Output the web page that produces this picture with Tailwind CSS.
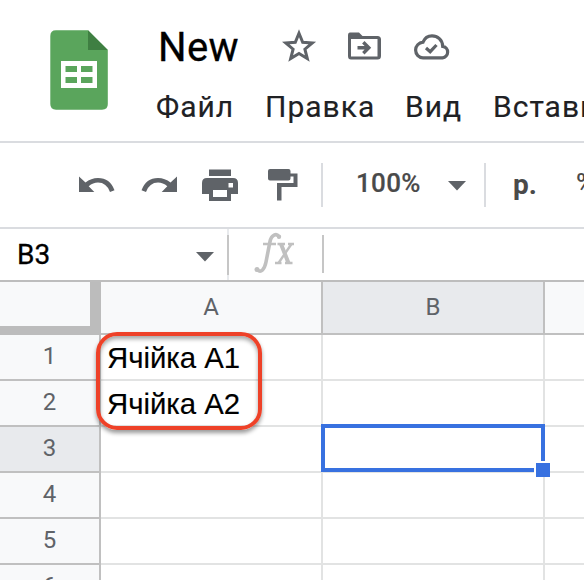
<!DOCTYPE html>
<html lang="ru">
<head>
<meta charset="utf-8">
<title>New</title>
<script src="https://cdn.jsdelivr.net/npm/@tailwindcss/browser@4"></script>
</head>
<body class="w-[584px] h-[580px] overflow-hidden bg-white font-['Roboto',sans-serif] text-black">
<div class="w-[584px] h-[580px] overflow-hidden flex flex-col">
  <header class="h-[143px] shrink-0 border-b-2 border-[#dadce0] flex overflow-hidden">
    <svg class="shrink-0 ml-[50px] mt-[30px]" width="58" height="80" viewBox="0 0 58 80">
      <path fill="#5aa55c" d="M6 .3H38L57.800 20V74Q58 79.700 52 79.700H6Q.3 79.700 .3 74V6Q.3 .3 6 .3Z"/>
      <path fill="#3f7f42" d="M38 .3L57.800 20H38Z"/>
      <path fill="#fff" fill-rule="evenodd" d="M11 31H47V58H11ZM15.500 36V42H27V36ZM31 36V42H42.500V36ZM15.500 47V53H27V47ZM31 47V53H42.500V47Z"/>
    </svg>
    <div class="shrink-0 pl-[48px] flex flex-col">
      <div class="flex h-[67px] mt-[27px] mb-[-2px]">
        <h1 class="w-[126px] pl-[2px] mt-px text-[40px] leading-[40px] tracking-[0.4px] whitespace-nowrap [-webkit-text-stroke:0.3px_#000]">New</h1>
        <svg class="shrink-0 mt-[1.500px]" width="36" height="36" viewBox="0 0 36 36"><path fill="none" stroke="#5f6368" stroke-width="3" d="M17 4.300L20.700 13.300L30.300 14L22.900 20.200L25.300 29.600L17 24.500L8.700 29.600L11.100 20.200L3.700 14L13.300 13.300Z"/></svg>
        <svg class="shrink-0 ml-[29px] mt-[5px]" width="34" height="28" viewBox="0 0 34 28"><path fill="#5f6368" fill-rule="evenodd" d="M3 0.500H12L15.500 4H30.500Q34 4 34 7.500V24Q34 27.500 30.500 27.500H4Q1 27.500 1 24V3.500Q1 .5 3 .5ZM4 7V24.500H30.500V7Z"/><path d="M10.500 15.800H21M16.300 10.300L21.800 15.800L16.300 21.300" fill="none" stroke="#5f6368" stroke-width="3.400"/></svg>
        <svg class="shrink-0 ml-[32.500px] mt-[7px]" width="36" height="26" viewBox="0 0 36 26"><path fill="none" stroke="#5f6368" stroke-width="3.200" d="M9 23.800H28.500A5.800 5.800 0 0 0 28.700 12.300C28.500 6 23.500 1.800 18 1.800C13.800 1.800 10.500 4.500 9 8.200C4.700 8.600 1.600 12 1.600 16C1.600 20.500 5 23.800 9 23.800Z"/><path d="M12 14L16.200 17.700L22.500 11" fill="none" stroke="#5f6368" stroke-width="3.200"/></svg>
      </div>
      <nav class="flex text-[30px] leading-[30px] tracking-[1px] text-[#202124] whitespace-nowrap [-webkit-text-stroke:0.15px_#202124]">
        <span class="w-[109px] shrink-0">Файл</span><span class="w-[140px] shrink-0">Правка</span><span class="w-[88px] shrink-0">Вид</span><span class="shrink-0">Вставка</span>
      </nav>
    </div>
  </header>
  <div class="h-[86px] shrink-0 border-b-2 border-[#dadce0] flex items-start overflow-hidden">
    <svg class="shrink-0 ml-[79px] mt-[33px]" width="36" height="18" viewBox="0 0 36 18"><path fill="#5f6368" d="M0 .5V16H15.300L9.700 10.200Q14 6.500 19 6.500Q27.500 6.500 31 16L35.500 14.300Q31 2 19 2Q12 2 6.500 6.500Z"/></svg>
    <svg class="shrink-0 ml-[26px] mt-[33px]" width="36" height="18" viewBox="0 0 36 18"><path fill="#5f6368" d="M36 .5V16H20.700L26.300 10.200Q22 6.500 17 6.500Q8.500 6.500 5 16L.5 14.300Q5 2 17 2Q24 2 29.500 6.500Z"/></svg>
    <svg class="shrink-0 ml-[25px] mt-[26px]" width="36" height="32" viewBox="0 0 36 32"><path fill="#5f6368" fill-rule="evenodd" d="M7 .5H29V7H7ZM5 9H31Q36 9 36 14V25H29V32H7V25H0V14Q0 9 5 9ZM26.500 14V18.500H31V14ZM11 21V28H25V21Z"/></svg>
    <svg class="shrink-0 ml-[30px] mt-[26px]" width="30" height="32" viewBox="0 0 30 32"><path fill="#5f6368" d="M2 0H20.500Q22.500 0 22.500 2V4.500H29.500V18H13.500V31.500H9V14H25.500V7.500H22.500V9.500Q22.500 11.500 20.500 11.500H2Q0 11.500 0 9.500V2Q0 0 2 0Z"/></svg>
    <div class="w-[2px] h-[44px] mt-[20px] ml-[23px] bg-[#dadce0] shrink-0"></div>
    <span class="shrink-0 w-[91px] ml-[33px] mt-[27px] text-[26px] leading-[26px] tracking-[0.3px] font-medium text-[#4a4a4a] [-webkit-text-stroke:0.2px_#4a4a4a]">100%</span>
    <svg class="shrink-0 mt-[38px] ml-px" width="18" height="10" viewBox="0 0 18 10"><path fill="#5f6368" d="M0 0H18L9 9.500Z"/></svg>
    <div class="w-[2px] h-[44px] mt-[20px] ml-[18px] bg-[#dadce0] shrink-0"></div>
    <span class="shrink-0 w-[64px] ml-[27px] mt-[28px] text-[28px] leading-[28px] font-bold text-[#4a4a4a]">р.</span>
    <span class="shrink-0 mt-[27px] ml-[-1px] text-[26px] leading-[26px] font-medium text-[#4a4a4a]">%</span>
  </div>
  <div class="h-[53px] shrink-0 border-b-2 border-[#bdbdbd] flex items-start">
    <span class="shrink-0 w-[179px] ml-[17px] mt-[12px] text-[28px] leading-[28px] [-webkit-text-stroke:0.3px_#000]">B3</span>
    <svg class="shrink-0 mt-[23px]" width="18" height="10" viewBox="0 0 18 10"><path fill="#5f6368" d="M0 0H18L9 9.500Z"/></svg>
    <div class="w-[2px] h-[51px] ml-[13px] py-[6px] bg-[#e8eaed] shrink-0"><div class="h-[40px] bg-[#c6c6c6]"></div></div>
    <svg class="shrink-0 ml-[25px] mt-[3px]" width="44" height="44" viewBox="0 0 44 44"><g fill="none" stroke="#c0c0c0"><path stroke-width="3.600" stroke-linecap="round" d="M24.800 4.500C22.500 1 17.500 2.500 16 9.500L12 30C10.500 37.500 7 41 3.500 38"/><path stroke-width="2.400" d="M9 12H22M23.500 12H31M34 12H40M21 31H27.500M31 31H38.500"/><path stroke-width="4" d="M27 12L34.500 31"/><path stroke-width="2.400" d="M37.500 12L24.500 31"/></g><circle cx="3" cy="37.500" r="2.500" fill="#c0c0c0"/><circle cx="25" cy="4.800" r="2.200" fill="#c0c0c0"/></svg>
    <div class="w-[2px] h-[38px] mt-[6px] ml-[24px] bg-[#c6c6c6] shrink-0"></div>
  </div>
  <main class="relative grid grid-cols-[101px_222px_222px_222px] grid-rows-[53px_repeat(6,46px)] text-[24px] leading-[24px] text-[#5f6368]">
    <div class="bg-[#f8f9fa] border-r-[11px] border-b-[9px] border-[#bcbcbc]"></div>
    <div class="bg-[#f8f9fa] border-r-2 border-b-2 border-[#c0c0c0] flex justify-center pt-[13px]">A</div>
    <div class="bg-[#e8eaed] border-r-2 border-b-2 border-[#c0c0c0] flex justify-center pt-[13px]">B</div>
    <div class="bg-[#f8f9fa] border-r-2 border-b-2 border-[#c0c0c0]"></div>

    <div class="bg-[#f8f9fa] border-r-2 border-b-2 border-[#c0c0c0] flex justify-center pt-[9px]">1</div>
    <div class="border-r-2 border-b-2 border-[#e2e3e3] pl-[6px] pt-[8px] text-black text-[29.333px] leading-[30px] font-['Liberation_Sans',Arial,sans-serif] whitespace-nowrap [-webkit-text-stroke:0.15px_#000]">Ячійка А1</div>
    <div class="border-r-2 border-b-2 border-[#e2e3e3]"></div><div class="border-b-2 border-[#e2e3e3]"></div>

    <div class="bg-[#f8f9fa] border-r-2 border-b-2 border-[#c0c0c0] flex justify-center pt-[9px]">2</div>
    <div class="border-r-2 border-b-2 border-[#e2e3e3] pl-[6px] pt-[8px] text-black text-[29.333px] leading-[30px] font-['Liberation_Sans',Arial,sans-serif] whitespace-nowrap [-webkit-text-stroke:0.15px_#000]">Ячійка А2</div>
    <div class="border-r-2 border-b-2 border-[#e2e3e3]"></div><div class="border-b-2 border-[#e2e3e3]"></div>

    <div class="bg-[#e8eaed] border-r-2 border-b-2 border-[#c0c0c0] flex justify-center pt-[9px]">3</div>
    <div class="border-r-2 border-b-2 border-[#e2e3e3]"></div><div class="border-r-2 border-b-2 border-[#e2e3e3]"></div><div class="border-b-2 border-[#e2e3e3]"></div>

    <div class="bg-[#f8f9fa] border-r-2 border-b-2 border-[#c0c0c0] flex justify-center pt-[9px]">4</div>
    <div class="border-r-2 border-b-2 border-[#e2e3e3]"></div><div class="border-r-2 border-b-2 border-[#e2e3e3]"></div><div class="border-b-2 border-[#e2e3e3]"></div>

    <div class="bg-[#f8f9fa] border-r-2 border-b-2 border-[#c0c0c0] flex justify-center pt-[9px]">5</div>
    <div class="border-r-2 border-b-2 border-[#e2e3e3]"></div><div class="border-r-2 border-b-2 border-[#e2e3e3]"></div><div class="border-b-2 border-[#e2e3e3]"></div>

    <div class="bg-[#f8f9fa] border-r-2 border-b-2 border-[#c0c0c0] flex justify-center pt-[9px]">6</div>
    <div class="border-r-2 border-[#e2e3e3]"></div><div class="border-r-2 border-[#e2e3e3]"></div><div></div>

    <!-- active cell and its fill handle -->
    <div class="absolute left-[321px] top-[142px] w-[224px] h-[48px] border-4 border-[#3871e0]"></div>
    <div class="absolute left-[534px] top-[179px] w-[16px] h-[16px] bg-[#3871e0] border-l-2 border-t-2 border-white"></div>
    <!-- highlight around A1:A2 -->
    <div class="absolute left-[96px] top-[50px] w-[166px] h-[98px] rounded-[21px] border-4 border-[#ee4128] shadow-[0_3px_4px_rgba(0,0,0,0.4),inset_0_3px_4px_rgba(0,0,0,0.35)]"></div>
  </main>
</div>
</body>
</html>
